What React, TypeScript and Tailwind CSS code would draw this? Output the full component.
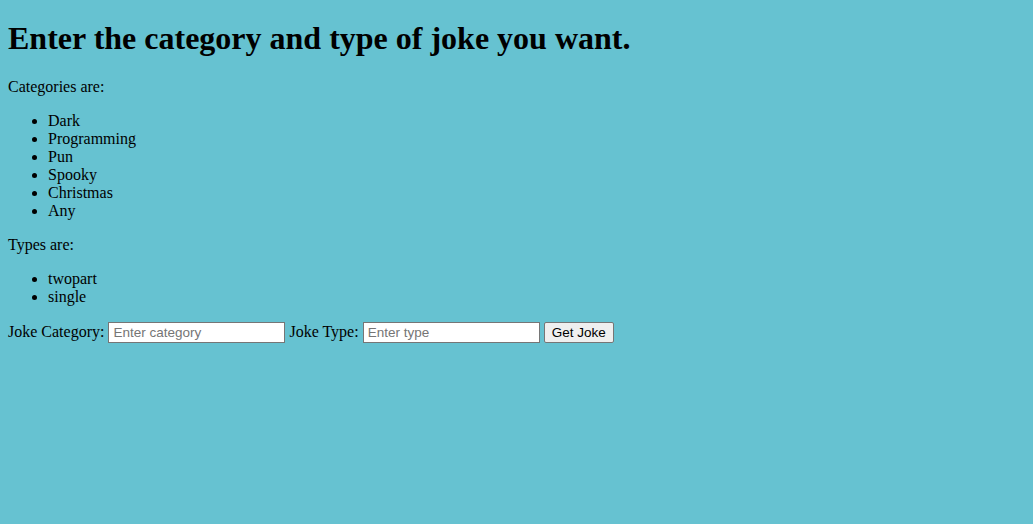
import React, { useState } from 'react';

const categories = ['Dark', 'Programming', 'Pun', 'Spooky', 'Christmas', 'Any'];
const types = ['twopart', 'single'];

export default function App() {
  const [category, setCategory] = useState('');
  const [type, setType] = useState('');

  return (
    <div className="min-h-screen bg-[#66c2d1] px-2 pt-[19.5px] pb-2 font-['Liberation_Serif',serif] text-[16px] leading-[normal] text-black">
      <h1 className="text-[32px] font-bold leading-[37px] mb-[21.44px]">
        Enter the category and type of joke you want.
      </h1>

      <p className="my-0">Categories are:</p>
      <ul className="list-disc pl-10 my-4">
        {categories.map((c) => (
          <li key={c}>{c}</li>
        ))}
      </ul>

      <p>Types are:</p>
      <ul className="list-disc pl-10 my-4">
        {types.map((t) => (
          <li key={t}>{t}</li>
        ))}
      </ul>

      {/* Form */}
      <div>
        <label>
          Joke Category:{' '}
          <input
            type="text"
            value={category}
            onChange={(e) => setCategory(e.target.value)}
            placeholder="Enter category"
            className="w-[177px] h-[21px] bg-white border border-[#767676] pl-[4px] pr-[2px] py-[1px] font-['Liberation_Sans',sans-serif] text-[13.5px] placeholder:text-[#757575] align-baseline"
          />
        </label>{' '}
        <label>
          Joke Type:{' '}
          <input
            type="text"
            value={type}
            onChange={(e) => setType(e.target.value)}
            placeholder="Enter type"
            className="w-[177px] h-[21px] bg-white border border-[#767676] pl-[4px] pr-[2px] py-[1px] font-['Liberation_Sans',sans-serif] text-[13.5px] placeholder:text-[#757575] align-baseline"
          />
        </label>{' '}
        <button
          type="button"
          className="h-[21px] bg-[#efefef] border border-[#767676] rounded-[2px] px-[7px] py-[1px] font-['Liberation_Sans',sans-serif] text-[13.5px] text-black align-baseline"
        >
          Get Joke
        </button>
      </div>
    </div>
  );
}
